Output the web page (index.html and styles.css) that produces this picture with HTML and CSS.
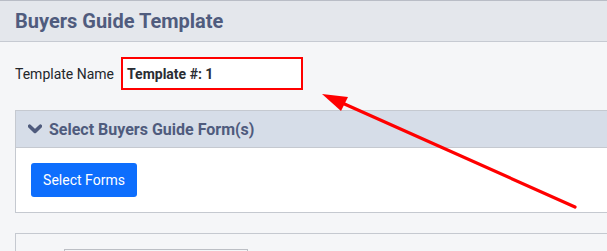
FILE: index.html
```html
<!DOCTYPE html>
<html>
<head>
<meta charset="utf-8">
<link rel="stylesheet" href="styles.css">
</head>
<body>
<div class="page-header"><h1 class="title">Buyers Guide Template</h1></div>
<div class="content">
  <div class="form-row">
    <label class="label">Template Name</label>
    <div class="name-box">Template #: 1</div>
  </div>
  <div class="panel">
    <div class="panel-head">
      <svg class="chev" width="14" height="10" viewBox="0 0 14 10"><path d="M1.6 2.2 L7 7.4 L12.4 2.2" fill="none" stroke="#4f5b7d" stroke-width="3.6" stroke-linecap="round" stroke-linejoin="round"/></svg>
      <span>Select Buyers Guide Form(s)</span>
    </div>
    <div class="panel-body">
      <button class="btn">Select Forms</button>
    </div>
  </div>
  <div class="panel2">
    <div class="field"></div>
  </div>
</div>
<svg class="arrow" width="607" height="251" viewBox="0 0 607 251">
  <line x1="575" y1="207" x2="340" y2="102" stroke="#ff0000" stroke-width="3.2" stroke-linecap="round"/>
  <polygon points="322,94 348,97 341,111" fill="#ff0000"/>
</svg>
</body>
</html>
```
FILE: styles.css
```css
html, body {
  margin: 0;
  padding: 0;
}
body {
  width: 607px;
  height: 251px;
  overflow: hidden;
  background: #f5f6f8;
  font-family: Roboto, "Liberation Sans", sans-serif;
  position: relative;
}
.page-header {
  border-top: 1px solid #b9bdc6;
  border-bottom: 1px solid #c6cad2;
  background: #e4e7ec;
  height: 40px;
  display: flex;
  align-items: center;
  padding-left: 15px;
}
.title {
  margin: 0;
  font-size: 20px;
  font-weight: 700;
  color: #505c7e;
}
.content {
  padding: 15px 0 0 15px;
}
.form-row {
  display: flex;
  align-items: center;
  gap: 7px;
}
.label {
  font-size: 14px;
  color: #23262b;
}
.name-box {
  box-sizing: border-box;
  width: 182px;
  height: 33px;
  border: 2px solid #ff0000;
  background: #fff;
  font-size: 14px;
  font-weight: 700;
  color: #2a2d33;
  display: flex;
  align-items: center;
  padding-left: 4px;
}
.panel {
  margin-top: 20px;
  margin-right: -20px;
  border: 1px solid #c5c9d0;
  background: #fff;
}
.panel-head {
  height: 36px;
  background: #d6dde8;
  border-bottom: 1px solid #c5c9d0;
  display: flex;
  align-items: center;
  padding-left: 12px;
  gap: 7px;
  font-size: 16px;
  font-weight: 700;
  color: #4f5b7d;
}
.chev {
  display: block;
}
.panel-body {
  height: 64px;
  display: flex;
  align-items: center;
  padding-left: 15px;
}
.btn {
  width: 106px;
  height: 34px;
  background: #0d6efd;
  color: #fff;
  border: none;
  border-radius: 3px;
  font-family: Roboto, "Liberation Sans", sans-serif;
  font-size: 14px;
  padding: 0;
}
.panel2 {
  margin-top: 20px;
  margin-right: -20px;
  border: 1px solid #c5c9d0;
  height: 30px;
  padding: 15px 0 0 48px;
  background: #f5f6f8;
}
.field {
  width: 182px;
  height: 20px;
  border: 1px solid #bcbfc5;
  background: #f5f6f8;
}
.arrow {
  position: absolute;
  left: 0;
  top: 0;
  pointer-events: none;
}
```
